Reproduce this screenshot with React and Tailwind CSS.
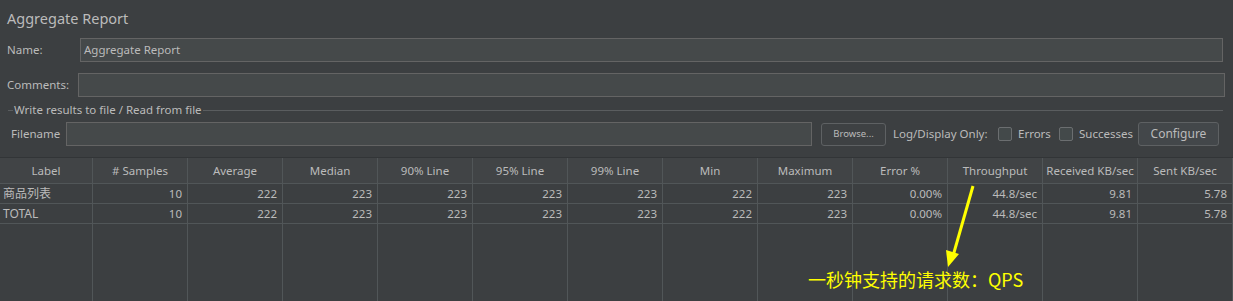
import React from "react";

const cols = [
  "Label",
  "# Samples",
  "Average",
  "Median",
  "90% Line",
  "95% Line",
  "99% Line",
  "Min",
  "Maximum",
  "Error %",
  "Throughput",
  "Received KB/sec",
  "Sent KB/sec",
];

const rows = [
  ["商品列表", "10", "222", "223", "223", "223", "223", "222", "223", "0.00%", "44.8/sec", "9.81", "5.78"],
  ["TOTAL", "10", "222", "223", "223", "223", "223", "222", "223", "0.00%", "44.8/sec", "9.81", "5.78"],
];

const gridCols = "grid grid-cols-[93px_repeat(11,95px)_95px]";

export default function App() {
  return (
    <div
      className="relative w-[1233px] h-[301px] overflow-hidden bg-[#3c3f41] text-[#bbbbbb] flex flex-col"
      style={{ fontFamily: '"Noto Sans", "Noto Sans CJK SC", sans-serif' }}
    >
      {/* Title */}
      <div className="h-[36px] flex items-center pl-[7px] text-[14.5px] leading-none shrink-0">
        Aggregate Report
      </div>

      {/* Name */}
      <div className="mt-[2px] h-[24px] flex items-center shrink-0 text-[11.5px]">
        <div className="w-[80px] pl-[7px]">Name:</div>
        <div className="flex-1 mr-[10px] h-full bg-[#45494a] border border-[#646464] flex items-center pl-[3px]">
          Aggregate Report
        </div>
      </div>

      {/* Comments */}
      <div className="mt-[11px] h-[24px] flex items-center shrink-0 text-[11.5px]">
        <div className="w-[78px] pl-[7px]">Comments:</div>
        <div className="flex-1 mr-[8px] h-full bg-[#45494a] border border-[#646464]" />
      </div>

      {/* Section title */}
      <div className="mt-[5px] h-[16px] flex items-center pl-[8px] pr-[10px] shrink-0">
        <div className="w-[5px] h-px bg-[#5a5d5f]" />
        <div className="px-[1px] text-[11.5px] leading-none whitespace-nowrap">Write results to file / Read from file</div>
        <div className="flex-1 h-px bg-[#5a5d5f]" />
      </div>

      {/* Filename row */}
      <div className="mt-[4px] h-[24px] flex items-center shrink-0 text-[11.5px] whitespace-nowrap">
        <div className="w-[66px] pl-[11px] shrink-0">Filename</div>
        <div className="w-[746px] shrink-0 h-full bg-[#45494a] border border-[#646464]" />
        <div className="ml-[9px] w-[65px] shrink-0 h-[23px] border border-[#5e6163] rounded-[3px] bg-[#3e4143] flex items-center justify-center text-[9.5px]">
          Browse...
        </div>
        <div className="ml-[7px] w-[105px] shrink-0">Log/Display Only:</div>
        <div className="w-[14px] h-[14px] shrink-0 border border-[#6b6e70] rounded-[2px] bg-[#43494a]" />
        <div className="ml-[6px] w-[41px] shrink-0">Errors</div>
        <div className="w-[14px] h-[14px] shrink-0 border border-[#6b6e70] rounded-[2px] bg-[#43494a]" />
        <div className="ml-[6px] w-[59px] shrink-0">Successes</div>
        <div className="w-[81px] shrink-0 h-full border border-[#5e6163] rounded-[3px] bg-[#43474a] flex items-center justify-center text-[12px]">
          Configure
        </div>
      </div>

      {/* Table */}
      <div className="mt-[11px] flex-1 flex flex-col border-t border-[#323537] text-[11.5px]">
        <div className={`${gridCols} bg-[#414446]`}>
          {cols.map((c) => (
            <div
              key={c}
              className="h-[26px] border-r border-b border-[#515658] flex items-center justify-center whitespace-nowrap"
            >
              {c}
            </div>
          ))}
        </div>
        {rows.map((r, i) => (
          <div key={i} className={gridCols}>
            {r.map((v, j) => (
              <div
                key={j}
                className={`h-[20px] border-r border-b border-[#515658] flex items-center whitespace-nowrap ${
                  j === 0 ? "pl-[3px] text-[12px]" : "justify-end pr-[5px]"
                }`}
              >
                {v}
              </div>
            ))}
          </div>
        ))}
        <div className={`${gridCols} flex-1`}>
          {cols.map((c) => (
            <div key={c} className="border-r border-[#515658]" />
          ))}
        </div>
      </div>

      {/* Annotation overlay */}
      <svg
        className="absolute left-0 top-0 pointer-events-none"
        width="1233"
        height="301"
        viewBox="0 0 1233 301"
      >
        <line x1="973" y1="186" x2="953" y2="256" stroke="#ffff00" strokeWidth="3" />
        <polygon points="948,267 946,250 959,254" fill="#ffff00" />
      </svg>
      <div
        className="absolute left-[808px] top-[270px] text-[18px] leading-none text-[#ffff00] whitespace-nowrap"
        style={{ fontFamily: '"Noto Sans CJK SC", sans-serif' }}
      >
        一秒钟支持的请求数：QPS
      </div>
    </div>
  );
}
